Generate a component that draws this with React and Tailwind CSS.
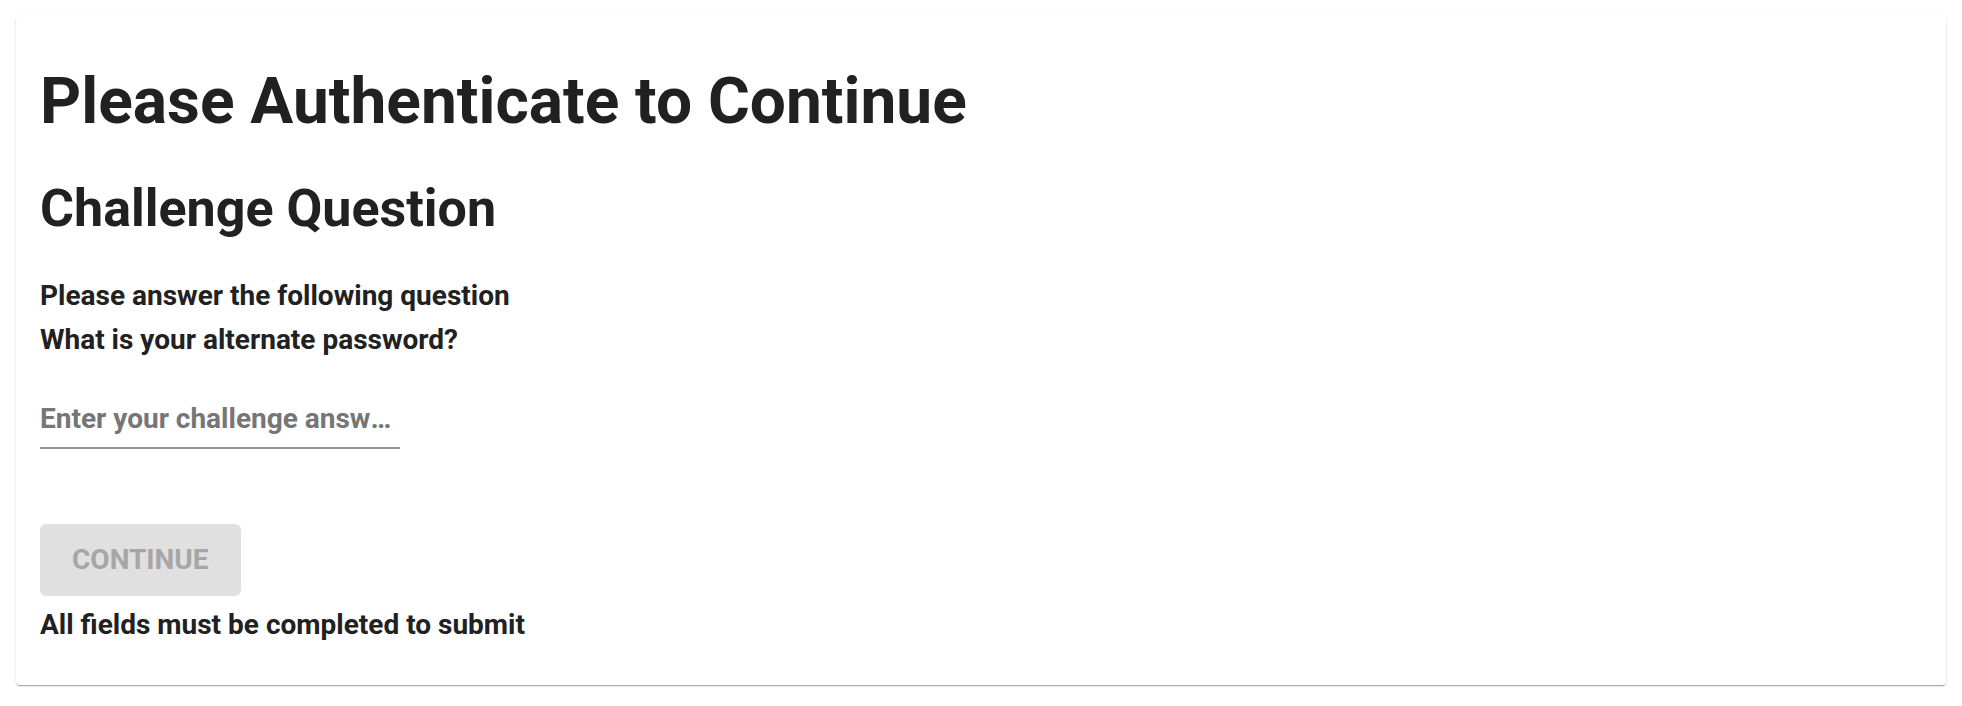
import React, { useState } from 'react';

const App = () => {
  const [answer, setAnswer] = useState('');

  return (
    <div className="min-h-screen bg-white p-4 font-['Roboto',sans-serif] text-[#212121]">
      <div className="rounded bg-white px-6 pt-[48px] pb-[38px] shadow-[0_2px_1px_-1px_rgba(0,0,0,0.2),0_1px_1px_0_rgba(0,0,0,0.14),0_1px_3px_0_rgba(0,0,0,0.12)]">
        <h1 className="text-[64px] font-bold leading-[1.2]">Please Authenticate to Continue</h1>
        <h2 className="mt-[37px] text-[52px] font-bold leading-[1.2]">Challenge Question</h2>

        <div className="mt-[34px] text-[28px] font-bold leading-[44px]">
          <p>Please answer the following question</p>
          <p>What is your alternate password?</p>
        </div>

        <div className="mt-[41px] w-[360px] border-b-2 border-[#949494] pb-[12px]">
          <input
            type="password"
            value={answer}
            onChange={(e) => setAnswer(e.target.value)}
            placeholder="Enter your challenge answer"
            className="block h-[32px] w-full text-ellipsis bg-transparent pr-[7px] text-[28px] font-bold leading-[32px] outline-none placeholder:text-[#767676]"
          />
        </div>

        <button
          type="button"
          disabled={!answer}
          className="mt-[75px] block h-[72px] rounded-md bg-[#e0e0e0] px-8 text-[28px] font-bold uppercase text-[#a6a6a6]"
        >
          Continue
        </button>
        <p className="mt-[7px] text-[28px] font-bold leading-[44px]">All fields must be completed to submit</p>
      </div>
    </div>
  );
};

export default App;
